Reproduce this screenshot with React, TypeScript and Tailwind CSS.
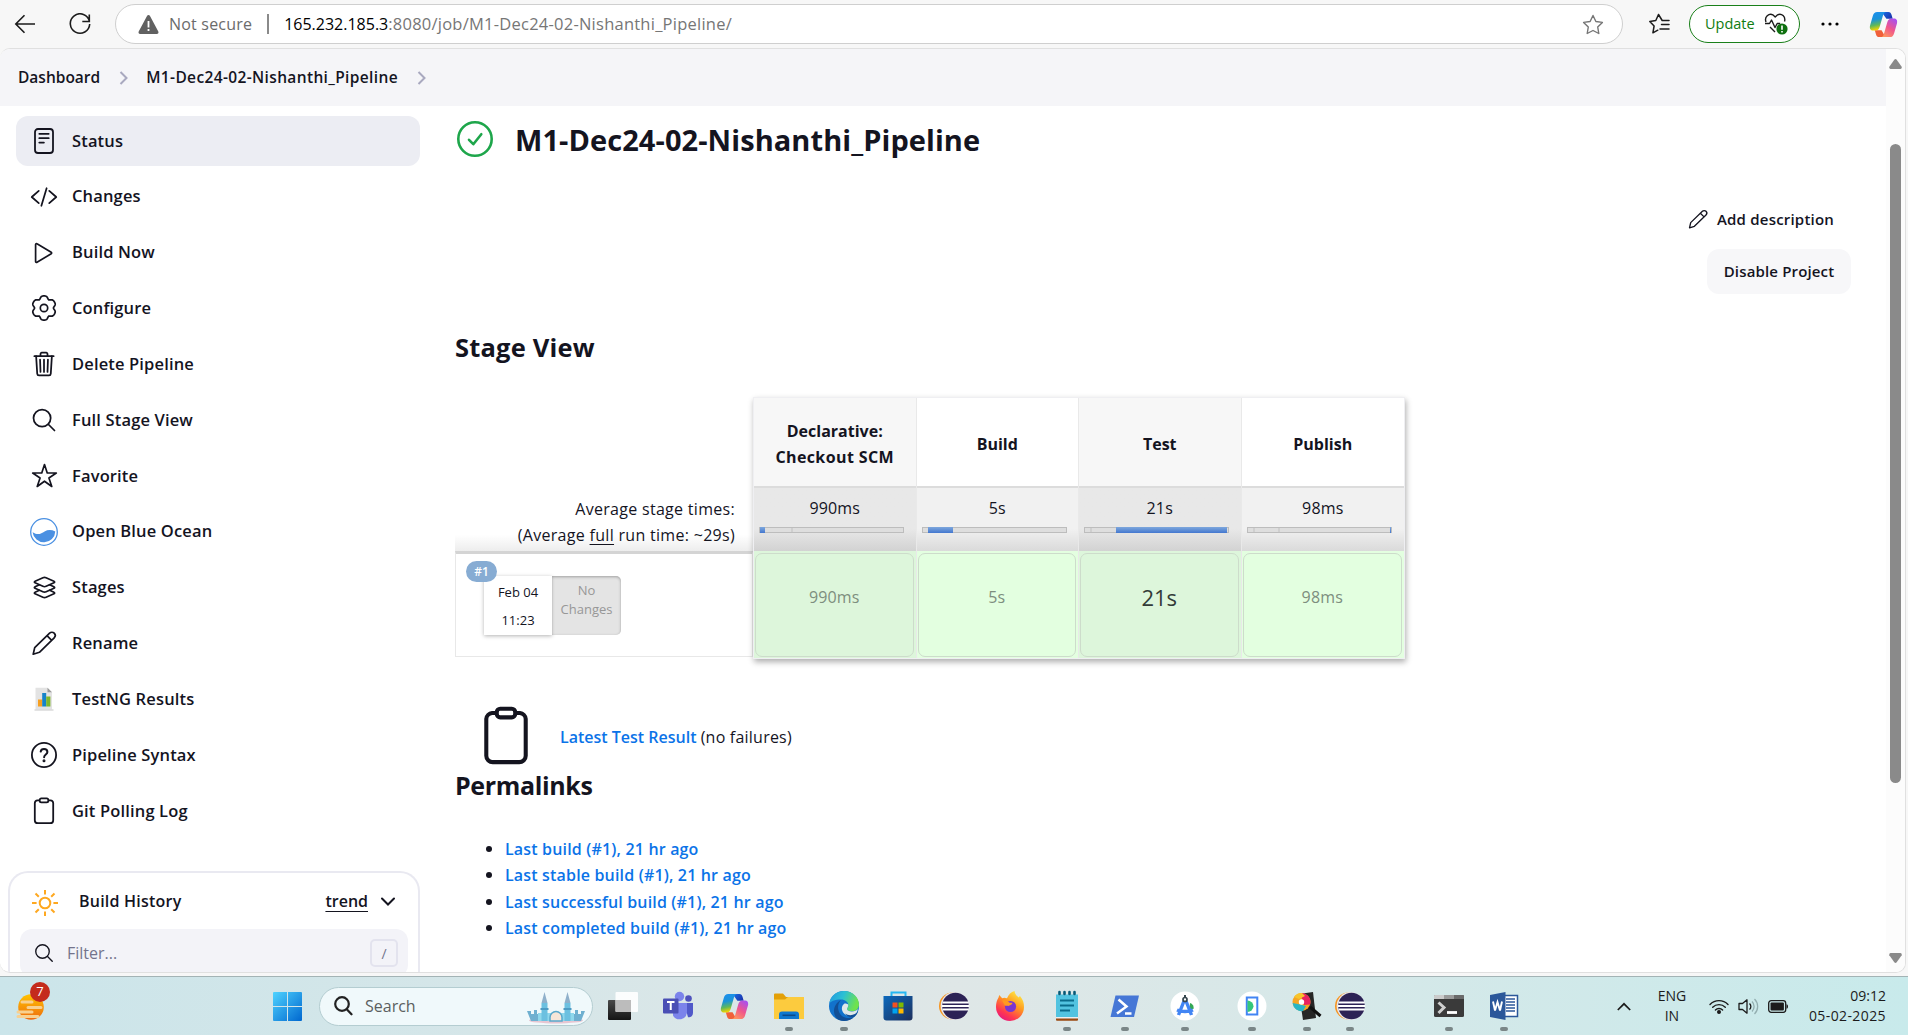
import { type ReactNode } from 'react';
import { IoCodeSlashOutline, IoSearchOutline, IoLayersOutline, IoStarOutline, IoTrashOutline } from 'react-icons/io5';

const ink = '#14141f';

function S({ c = '', children }: { c?: string; children: ReactNode }) {
  return <span className={'inline-block whitespace-nowrap ' + c}>{children}</span>;
}

function StatusIcon() {
  return (
    <svg width="28" height="28" viewBox="0 0 28 28" fill="none" stroke={ink} strokeWidth="1.8" strokeLinecap="round">
      <rect x="5" y="2" width="18" height="24" rx="3" />
      <path d="M9.3 6.8h9.4M9.3 11.2h9.4M9.3 15.6h4.6" />
    </svg>
  );
}
function PlayIcon() {
  return (
    <svg width="28" height="28" viewBox="0 0 28 28" fill="none" stroke={ink} strokeWidth="1.7" strokeLinejoin="round">
      <path d="M5.6 5.6v16.800c0 .8.8 1.200 1.400.8l14.200-8.400c.6-.4.6-1.200 0-1.600L7 4.800c-.6-.4-1.400 0-1.400.8z" />
    </svg>
  );
}

// Six-lobed cog outline, sampled in polar coordinates.
const cog =
  Array.from({ length: 120 }, (_, i) => {
    const t = (i / 120) * Math.PI * 2;
    const r = 11.1 + 1.3 * Math.cos(6 * (t + Math.PI / 2)) - 0.35 * Math.cos(12 * (t + Math.PI / 2));
    return `${i ? 'L' : 'M'}${(14 + r * Math.cos(t)).toFixed(2)} ${(14 + r * Math.sin(t)).toFixed(2)}`;
  }).join('') + 'Z';

function GearIcon() {
  return (
    <svg width="28" height="28" viewBox="0 0 28 28" fill="none" stroke={ink} strokeWidth="1.7" strokeLinejoin="round">
      <path d={cog} />
      <circle cx="14" cy="14" r="3.700" />
    </svg>
  );
}
function OceanIcon() {
  return (
    <svg width="28" height="28" viewBox="0 0 28 28">
      <circle cx="14" cy="14" r="13.300" fill="white" stroke="#4a90e2" strokeWidth="1.300" />
      <path d="M2.600 14.200C8 17.600 11 15.600 14.600 13.400 18 11.400 21.600 11.600 25.300 13.400A11.400 11.400 0 0 1 2.600 14.200z" fill="#4a90e2" />
    </svg>
  );
}
function PencilIcon({ size = 28 }: { size?: number }) {
  return (
    <svg width={size} height={size} viewBox="0 0 28 28" fill="none" stroke={ink} strokeWidth="1.700" strokeLinejoin="round">
      <path d="M3.200 25.200l1.500-6.600L19.600 4.200a3.200 3.200 0 0 1 4.600 4.600L9.400 23.300zM17 6.700l4.700 4.600" />
    </svg>
  );
}
function TestNGIcon() {
  return (
    <svg width="28" height="28" viewBox="0 0 28 28">
      <path d="M5.500 2.800h12l4.500 4.400v17.200h-16.500z" fill="#e3e3e3" />
      <path d="M17.500 2.800l4.500 4.400h-4.500z" fill="#9a9a9a" />
      <path d="M4.500 24.400h19v1.200h-19z" fill="#d0d0d0" />
      <rect x="8" y="14.500" width="4.200" height="7" fill="#f7a021" />
      <rect x="12.200" y="8" width="4" height="13.500" fill="#1683c8" />
      <rect x="16.200" y="11.500" width="4.200" height="10" fill="#7fb72b" />
    </svg>
  );
}
function HelpIcon() {
  return (
    <svg width="28" height="28" viewBox="0 0 28 28" fill="none" stroke={ink} strokeWidth="1.800" strokeLinecap="round" strokeLinejoin="round">
      <circle cx="14" cy="14" r="12.100" />
      <path d="M10.700 10.600c.2-1.500 1.500-2.500 3.300-2.500 2 0 3.400 1.100 3.400 2.800 0 2.600-3.300 2.500-3.300 5.300" strokeWidth="2" />
      <circle cx="14" cy="19.800" r=".6" fill={ink} />
    </svg>
  );
}
function ClipboardIcon({ size = 28, sw = 1.8 }: { size?: number; sw?: number }) {
  return (
    <svg width={size} height={size} viewBox="0 0 28 28" fill="none" stroke={ink} strokeWidth={sw}>
      <path d="M10 3.300H7.500A3 3 0 0 0 4.800 6v17.200a3 3 0 0 0 3 3h12.400a3 3 0 0 0 3-3V6a3 3 0 0 0-2.700-2.700H18" />
      <rect x="9.700" y="1.300" width="8.600" height="4" rx="1.600" />
    </svg>
  );
}

const nav: [string, ReactNode][] = [
  ['Status', <StatusIcon />],
  ['Changes', <IoCodeSlashOutline size={28} />],
  ['Build Now', <PlayIcon />],
  ['Configure', <GearIcon />],
  ['Delete Pipeline', <IoTrashOutline size={28} />],
  ['Full Stage View', <IoSearchOutline size={28} />],
  ['Favorite', <IoStarOutline size={27} />],
  ['Open Blue Ocean', <OceanIcon />],
  ['Stages', <IoLayersOutline size={27} />],
  ['Rename', <PencilIcon />],
  ['TestNG Results', <TestNGIcon />],
  ['Pipeline Syntax', <HelpIcon />],
  ['Git Polling Log', <ClipboardIcon />],
];

function Chevron() {
  return (
    <svg width="10" height="14" viewBox="0 0 10 14" fill="none" stroke="#a9a9bf" strokeWidth="2">
      <path d="M1.500 1l6 6-6 6" />
    </svg>
  );
}

function Copilot({ size = 30 }: { size?: number }) {
  return (
    <svg width={size} height={size} viewBox="0 0 30 30">
      <defs>
        <linearGradient id="cpa" x1="0" y1="0" x2="0.2" y2="1"><stop offset="0" stopColor="#1b8ff0" /><stop offset=".45" stopColor="#1b93d8" /><stop offset=".75" stopColor="#5fb85a" /><stop offset="1" stopColor="#f2d400" /></linearGradient>
        <linearGradient id="cpb" x1="0.8" y1="0" x2="0.2" y2="1"><stop offset="0" stopColor="#a850f0" /><stop offset=".5" stopColor="#f0568c" /><stop offset="1" stopColor="#ff9a5c" /></linearGradient>
        <linearGradient id="cpc" x1="0" y1="0" x2="1" y2="0.5"><stop offset="0" stopColor="#1a6fe8" /><stop offset="1" stopColor="#1a38b0" /></linearGradient>
      </defs>
      <path d="M13 2h7c2 0 2.800 1.200 3.300 3l1.200 4h-6.500z" fill="url(#cpc)" />
      <path d="M17 28h-6.500c-2 0-2.800-1.200-3.300-3L6 21h7z" fill="#f0603a" />
      <path d="M8.500 2h9.500c-2 0-2.900 1.400-3.500 3.500L11 17.500c-.8 2.500-2 3.700-4.500 3.700H4C1.200 21.200.4 18.500 1.100 16L4 6c.9-2.800 2-4 4.500-4z" fill="url(#cpa)" />
      <path d="M21.500 28H12c2 0 2.900-1.400 3.500-3.500L19 12.500c.8-2.500 2-3.700 4.500-3.700H26c2.800 0 3.600 2.700 2.900 5.200L26 24c-.9 2.800-2 4-4.500 4z" fill="url(#cpb)" />
    </svg>
  );
}

function AddressBar() {
  return (
    <header className="flex h-12 shrink-0 items-center bg-[#f7f7f7] pr-[10px] pl-[14px]">
      <svg width="22" height="20" viewBox="0 0 22 20" fill="none" stroke="#1b1b1b" strokeWidth="1.600"><path d="M21 10H2M10.500 1.200L1.800 10l8.700 8.800" /></svg>
      <svg className="ml-[33px]" width="22" height="22" viewBox="0 0 22 22" fill="none" stroke="#1b1b1b" strokeWidth="1.600"><path d="M20.500 8.500A9.700 9.700 0 1 0 20.700 11M20.300 1.500v7h-7" /></svg>
      <div className="ml-[24px] flex h-10 w-[1508px] items-center rounded-full border border-[#cfcfcf] bg-white pr-[18px] pl-[22px]">
        <svg width="21" height="19" viewBox="0 0 21 19"><path d="M10.500 0c.7 0 1.200.3 1.500.9l8.300 15.600c.6 1.100-.1 2.500-1.500 2.500H2.200C.8 19 .1 17.600.7 16.500L9 .9c.3-.6.8-.9 1.500-.9z" fill="#616161" /><path d="M9.600 6h1.800v6.500H9.600zM9.600 14h1.800v2H9.600z" fill="white" /></svg>
        <S c="ml-[10px] text-[16px] tracking-[0.2px] text-[#6b6b6b]">Not secure</S>
        <div className="mx-[15px] h-5 w-[2px] bg-[#8a8a8a]" />
        <div className="text-[16px] text-[#767676]"><S c="text-black">165.232.185.3</S><S c="text-[16.5px] tracking-[0.24px]">:8080/job/M1-Dec24-02-Nishanthi_Pipeline/</S></div>
        <svg className="ml-auto" width="22" height="21" viewBox="0 0 22 21" fill="none" stroke="#757575" strokeWidth="1.400" strokeLinejoin="round"><path d="M11 1.500l2.900 6 6.500.9-4.700 4.600 1.100 6.500-5.800-3-5.800 3L6.300 13 1.600 8.400l6.500-.9z" /></svg>
      </div>
      <svg className="ml-[25px]" width="22" height="22" viewBox="0 0 22 22" fill="none" stroke="#1b1b1b" strokeWidth="1.500" strokeLinejoin="round" strokeLinecap="round"><path d="M19.500 7.500h-5.300L10.500 1.500l-2.700 6-6 .9 4.300 4.600-1.200 6.800 4.900-2.600M13.500 11.500h7.500M12 16h9M15 7.500h6" /></svg>
      <div className="ml-[19px] flex h-[38px] w-[111px] items-center justify-between rounded-full border-[1.5px] border-[#1a801a] bg-white pr-[11px] pl-[15px]">
        <S c="text-[14.5px] text-[#107c10]">Update</S>
        <svg width="24" height="22" viewBox="0 0 24 22" fill="none" stroke="#1b1b1b" strokeWidth="1.400" strokeLinejoin="round"><path d="M2 9C0 4 5 0 8.800 1.800L11.200 4l2.400-2.200C17.500 0 22 3.500 20.500 8.500M1 10.500h4.500l2-3.500 3.500 7.500 2.200-4h3M6 14l5 5" /><circle cx="18" cy="16" r="5.600" fill="#0f7010" stroke="none" /><path d="M18 12.500v4.300M18 18v1.500" stroke="white" strokeWidth="1.600" /></svg>
      </div>
      <svg className="ml-[21px]" width="18" height="4" viewBox="0 0 18 4"><circle cx="2" cy="2" r="1.600" /><circle cx="9" cy="2" r="1.600" /><circle cx="16" cy="2" r="1.600" /></svg>
      <div className="ml-auto"><Copilot size={29} /></div>
    </header>
  );
}

function Sidebar() {
  return (
    <aside className="flex w-[420px] shrink-0 flex-col">
      <nav className="mt-[10px] ml-4 flex h-[719px] shrink-0 flex-col justify-between pb-0 min-h-[720px]">
        {nav.map(([label, icon], i) => (
          <div key={label} className={`flex h-[50px] shrink-0 items-center rounded-[12px] pl-[14px] ${i === 0 ? 'bg-[#ecedf3]' : ''}`}>
            <div className="flex w-7 justify-center">{icon}</div>
            <S c="ml-[14px] text-[16.5px] font-semibold tracking-[0.15px]">{label}</S>
          </div>
        ))}
      </nav>
      <section className="mt-[35px] ml-2 h-[130px] shrink-0 rounded-t-[20px] border-2 border-b-0 border-[#e9e9f1] px-[10px]">
        <div className="flex h-[56px] items-center pl-[11px]">
          <svg className="mt-1" width="28" height="28" viewBox="0 0 28 28" fill="none" stroke="#fea820" strokeWidth="2"><circle cx="14" cy="14" r="5.300" /><path d="M14 1v4.600M14 22.400V27M1 14h4.600M22.400 14H27M4.500 4.500l3.300 3.300M20.200 20.200l3.300 3.300M4.500 23.500l3.300-3.300M20.200 7.800l3.300-3.300" /></svg>
          <S c="ml-[20px] text-[16px] font-semibold tracking-[0.22px]">Build History</S>
          <div className="ml-auto flex items-center pr-[13px]">
            <S c="text-[16px] font-semibold underline decoration-1 underline-offset-4">trend</S>
            <svg className="ml-[13px]" width="14" height="9" viewBox="0 0 14 9" fill="none" stroke={ink} strokeWidth="2" strokeLinecap="round"><path d="M1 1.500l6 6 6-6" /></svg>
          </div>
        </div>
        <div className="flex h-[48px] items-center rounded-[12px] bg-[#f3f3f8] pr-[10px] pl-[13px]">
          <IoSearchOutline size={22} />
          <S c="ml-[12px] text-[16px] font-medium text-[#73738c]">Filter...</S>
          <div className="ml-auto flex h-7 w-7 items-center justify-center rounded-[5px] border-2 border-[#e3e3ee] text-[14px] text-[#73738c]">/</div>
        </div>
      </section>
    </aside>
  );
}

const stages = [
  { name: 'Declarative: Checkout SCM', avg: '990ms', left: 0, width: 3.5, marks: [22], head: 'bg-[#f7f7f7]', avgc: 'from-[#e8e8e8] via-[#e8e8e8] to-[#d2d2d2]', cell: 'bg-[#ddf6db]', big: false },
  { name: 'Build', avg: '5s', left: 3.5, width: 18, marks: [], head: 'bg-white', avgc: 'from-[#f1f1f1] via-[#f1f1f1] to-[#dadada]', cell: 'bg-[#e3ffe0]', big: false },
  { name: 'Test', avg: '21s', left: 22, width: 77.5, marks: [3.5], head: 'bg-[#f7f7f7]', avgc: 'from-[#e8e8e8] via-[#e8e8e8] to-[#d2d2d2]', cell: 'bg-[#ddf6db]', big: true },
  { name: 'Publish', avg: '98ms', left: 99.4, width: 1, marks: [3.5, 21.5], head: 'bg-white', avgc: 'from-[#f1f1f1] via-[#f1f1f1] to-[#dadada]', cell: 'bg-[#e3ffe0]', big: false },
];

function StageTable() {
  return (
    <div className="mt-[32px] flex items-start">
      <div className="flex h-[260px] w-[298px] flex-col">
        <div className="mt-[89px] flex h-[65px] flex-col items-end justify-end bg-linear-to-b from-white via-white via-75% to-[#ededed] pr-[18px] pb-[3px] text-[16px] leading-[26px] tracking-[0.3px]">
          <S>Average stage times:</S>
          <S>(Average <span className="underline underline-offset-[3px]">full</span> run time: ~29s)</S>
        </div>
        <div className="h-[106px] border border-t-3 border-[#e8e8e8] border-t-[#d4d4d4] pt-[22px] pl-[28px]">
          <div className="relative flex h-[59px] w-[137px] text-[13px]">
            <div className="absolute -top-[15px] -left-[18px] z-10 flex h-[21px] w-[31px] items-center justify-center rounded-full bg-[#87acd3] text-[12px] font-semibold text-white">#1</div>
            <div className="flex w-[68px] flex-col items-center justify-center gap-[2px] bg-white leading-[26px] shadow-[0_1px_4px_rgba(0,0,0,.3)]"><S>Feb 04</S><S>11:23</S></div>
            <div className="flex w-[69px] flex-col items-center rounded-r-[5px] bg-[#e4e4e4] pt-[5px] leading-[19px] text-[#979797] shadow-[inset_0_1px_3px_rgba(0,0,0,.3)]"><S>No</S><S>Changes</S></div>
          </div>
        </div>
      </div>
      <div className="grid h-[262px] w-[652px] grid-cols-4 border border-[#efeff2] shadow-[1px_3px_6px_rgba(0,0,0,.32)]">
        {stages.map((s) => (
          <div key={s.name} className="flex flex-col border-r border-[#e9e9e9] last:border-r-0">
            <div className={`flex h-[88px] items-center justify-center px-4 pt-[4px] text-center text-[16px] leading-[26px] font-bold ${s.head}`}>
              <span>{s.name.includes(' ') ? <><S>Declarative:</S><br /><S c="tracking-[0.4px]">Checkout SCM</S></> : <S>{s.name}</S>}</span>
            </div>
            <div className={`h-[65px] border-t-2 border-[#dcdcdc] bg-linear-to-b via-65% ${s.avgc}`}>
              <div className="mt-[8px] text-center text-[16px] leading-[24px] tracking-[0.15px]"><S>{s.avg}</S></div>
              <div className="relative mt-[7px] ml-[5px] h-[6px] w-[145px] border border-[#bdbdbd] bg-[#dedede]">
                {s.marks.map((m) => <div key={m} className="absolute top-0 h-full w-[2px] bg-[#cfcfcf]" style={{ left: `${m}%` }} />)}
                <div className="absolute -top-px h-[6px] bg-linear-to-b from-[#7ea7dc] to-[#4377cf]" style={{ left: `${s.left}%`, width: `${s.width}%` }} />
              </div>
            </div>
            <div className={`flex-1 pt-[2px] pr-[2px] pb-px pl-px ${s.cell}`}>
              <div className={`flex h-full items-center justify-center rounded-[7px] border border-[#cddccb] pb-[16px] ${s.big ? 'text-[22px] text-[#333b38]' : 'text-[16px] tracking-[0.15px] text-[#7d8e7e]'}`}><S>{s.avg}</S></div>
            </div>
          </div>
        ))}
      </div>
    </div>
  );
}

const links = ['Last build (#1), 21 hr ago', 'Last stable build (#1), 21 hr ago', 'Last successful build (#1), 21 hr ago', 'Last completed build (#1), 21 hr ago'];

function Main() {
  return (
    <main className="flex flex-1 flex-col pl-[35px]">
      <div className="mt-[12px] flex h-[44px] shrink-0 items-center">
        <svg className="-mt-0.5 ml-px" width="38" height="38" viewBox="0 0 38 38" fill="none" stroke="#1ea64b" strokeWidth="2.600" strokeLinecap="round" strokeLinejoin="round"><circle cx="19" cy="19" r="16.700" /><path d="M13 19.800l4.300 4.400 8-10" /></svg>
        <h1 className="ml-[21px] text-[29px] font-bold tracking-[0.07px]"><S>M1-Dec24-02-Nishanthi_Pipeline</S></h1>
      </div>
      <div className="mt-[42px] flex shrink-0 flex-col items-end pr-[35px]">
        <div className="flex h-[30px] items-center pr-[17px]"><PencilIcon size={22} /><S c="ml-[8px] text-[15px] font-semibold tracking-[0.2px]">Add description</S></div>
        <div className="mt-[15px] flex h-[45px] w-[144px] items-center justify-center rounded-[12px] bg-[#f7f7f9] text-[15px] font-semibold tracking-[0.15px]"><S>Disable Project</S></div>
      </div>
      <h2 className="mt-[35px] text-[25.5px] leading-[36px] font-bold tracking-[0.2px]"><S>Stage View</S></h2>
      <StageTable />
      <div className="mt-[45px] flex h-[64px] shrink-0 items-center">
        <div className="ml-[21px]"><ClipboardIcon size={60} sw={1.9} /></div>
        <p className="ml-[24px] pt-px text-[16px]"><S c="font-semibold text-[#0b73e8]">Latest Test Result</S> <S c="tracking-[0.22px]">(no failures)</S></p>
      </div>
      <h2 className="-mt-px text-[25px] leading-[36px] font-bold tracking-[-0.35px]"><S>Permalinks</S></h2>
      <ul className="mt-[33px] text-[16px] leading-[26.3px] font-semibold tracking-[0.17px] text-[#0b73e8]">
        {links.map((l) => (
          <li key={l} className="flex items-center pl-[31px]"><span className="mr-[13px] h-[6px] w-[6px] rounded-full bg-[#14141f]" /><S>{l}</S></li>
        ))}
      </ul>
    </main>
  );
}

function Eclipse() {
  return (
    <svg width="32" height="32" viewBox="0 0 32 32">
      <circle cx="14.500" cy="16" r="13.500" fill="#f7941e" /><circle cx="16.500" cy="16" r="13.900" fill="#e8e6ea" /><circle cx="17.500" cy="16" r="13.300" fill="#2c2255" />
      <path d="M4.500 12.500h26.300M4 16h27.200M4.500 19.500h26.300" stroke="#fff" strokeWidth="1.800" />
    </svg>
  );
}

const apps: { ml: string; dot?: boolean; icon: ReactNode }[] = [
  { ml: 'ml-[14px]', icon: <svg width="32" height="32" viewBox="0 0 32 32"><defs><linearGradient id="tv" x1="0" y1="0" x2="0" y2="1"><stop offset="0" stopColor="#4a4a4a" /><stop offset="1" stopColor="#151515" /></linearGradient></defs><rect x="1" y="10" width="23" height="20" rx="1" fill="url(#tv)" /><rect x="8.500" y="2" width="22.500" height="20" rx="1" fill="#fff" fillOpacity=".9" /><path d="M8.500 10H24v12H9.500a1 1 0 0 1-1-1z" fill="#bcbcbc" /></svg> },
  { ml: 'ml-[23px]', icon: <svg width="32" height="32" viewBox="0 0 32 32"><circle cx="26.500" cy="8.500" r="3.300" fill="#4f52bd" /><circle cx="17.500" cy="6.500" r="4.700" fill="#7b83eb" /><path d="M22 13h9v9.500c0 3.500-2.500 5-5 4.800z" fill="#5059c9" /><path d="M11 13h14v9.500a7.500 7.500 0 0 1-14 3z" fill="#7b83eb" /><rect x="1" y="8.500" width="15.500" height="15" rx="1" fill="#4a4fb5" /><path d="M5 12h7.500M8.750 12v8" stroke="white" strokeWidth="2" /></svg> },
  { ml: 'ml-[24px]', icon: <Copilot size={29} /> },
  { ml: 'ml-[23px]', dot: true, icon: <svg width="32" height="32" viewBox="0 0 32 32"><path d="M1 4.500a1 1 0 0 1 1-1h8l3 3.500h17v8H1z" fill="#e3a008" /><path d="M1 9.500h11l3-2.500h16v22H1z" fill="#fccb3e" /><path d="M6 29v-4.500a3 3 0 0 1 3-3h14a3 3 0 0 1 3 3V29z" fill="#0f78cf" /><path d="M9.500 25.300h13" stroke="#0b4a8a" strokeWidth="1.600" /></svg> },
  { ml: 'ml-[23px]', dot: true, icon: <svg width="32" height="32" viewBox="0 0 32 32"><defs><linearGradient id="ed" x1="0" y1="0" x2="1" y2="0.3"><stop offset="0" stopColor="#2196e0" /><stop offset=".5" stopColor="#2cc0d4" /><stop offset="1" stopColor="#6fe24e" /></linearGradient></defs><circle cx="16" cy="16" r="15" fill="#1272cc" /><path d="M1.200 14C2 6 8.500 1 16 1c9 0 15 6.500 15 13.500 0 4-3 6.800-7 6.800-3 0-5-1-5-2.300 0-1 1.300-1.500 1.300-4C20.300 12 17 9.500 13 9.500c-6 0-11 2-11.800 4.500z" fill="url(#ed)" /><path d="M13 10c-3 3-4 8-1.500 13 2.500 4.500 8.500 6.500 14.500 4C22 31 16 32 11 30c-7-4-7-15 2-20z" fill="#124f96" /><path d="M20.300 15c0 2-1.300 3-1.300 4 0 1.300 2 2.500 5 2.500 2.500 0 4.500-.9 6-2.500-.8 3-2 5.200-3.700 6.800-3 1-7.300.7-10-2-3.500-3.500-3-8 .2-10.300 2.200 0 3.600.5 3.800 1.500z" fill="#dfe8e8" /><path d="M30 21c-2 3.500-8 6-13 2.500 2 3.500 6 4.500 9.500 3.300 1.800-1.400 3-3.600 3.500-5.800z" fill="#124f96" /></svg> },
  { ml: 'ml-[22px]', icon: <svg width="32" height="32" viewBox="0 0 32 32"><defs><linearGradient id="st" x1="0" y1="0" x2="1" y2="1"><stop offset="0" stopColor="#0b69bd" /><stop offset="1" stopColor="#1e2f5c" /></linearGradient></defs><path d="M9.500 7V2.500h14V7" fill="none" stroke="#26b8f2" strokeWidth="2" /><path d="M1.500 6h29v21.500a3 3 0 0 1-3 3h-23a3 3 0 0 1-3-3z" fill="url(#st)" /><path d="M10.500 12.500h5v5h-5z" fill="#f25022" /><path d="M16.500 12.500h5v5h-5z" fill="#7fba00" /><path d="M10.500 18.500h5v5h-5z" fill="#00a4ef" /><path d="M16.500 18.500h5v5h-5z" fill="#ffb900" /></svg> },
  { ml: 'ml-[24px]', icon: <Eclipse /> },
  { ml: 'ml-[24px]', icon: <svg width="32" height="32" viewBox="0 0 32 32"><defs><linearGradient id="ff" x1="0.8" y1="0" x2="0.2" y2="1"><stop offset="0" stopColor="#fff04a" /><stop offset=".4" stopColor="#ff9a1f" /><stop offset=".75" stopColor="#ff3750" /><stop offset="1" stopColor="#e31587" /></linearGradient></defs><path d="M3.500 9.500C4.500 8 5 6.500 5.200 5l3 3.200c1.500-.7 3-.7 4.800 0C14.500 4.500 17 2 20.500 1c.2 3 2 4.500 4 6.500l1.500-1.500c3 3.500 4 7 4 11a14 14 0 0 1-28 0c0-3 .5-5.500 1.500-7.500z" fill="url(#ff)" /><circle cx="16.500" cy="16.500" r="5.600" fill="#7a35d0" /><path d="M8 10.500c3-.8 5 0 7 1.800 1 .8 2.500.5 3.500.7-.5 2-3 2-4 3-1.500-1-3 .5-3.500-.5z" fill="#ff9a1f" /></svg> },
  { ml: 'ml-[25px]', dot: true, icon: <svg width="32" height="32" viewBox="0 0 32 32"><path d="M5 4.500h22V27H5z" fill="#52c3e0" /><path d="M5 27h22v1.500H5z" fill="#eee" /><path d="M5 28.500h22v1.300a1 1 0 0 1-1 1H6a1 1 0 0 1-1-1z" fill="#9a4a12" /><path d="M9 10.500h14M9 15.500h14M9 20.500h10" stroke="#0a6c8c" strokeWidth="1.800" /><path d="M8.500 2v2M13.500 2v2M18.500 2v2M23.500 2v2" stroke="#075a78" strokeWidth="2.600" strokeLinecap="round" /></svg> },
  { ml: 'ml-[26px]', dot: true, icon: <svg width="32" height="32" viewBox="0 0 32 32"><path d="M6.500 5.500h23.500l-5 21.500H1.500z" fill="#4677d6" /><path d="M9.500 9.500l8 7-9.500 7M16 23.500h6.500" stroke="white" strokeWidth="2.500" fill="none" /></svg> },
  { ml: 'ml-[28px]', dot: true, icon: <svg width="32" height="32" viewBox="0 0 32 32"><circle cx="16" cy="16" r="14.500" fill="white" /><path d="M21 13a5 5 0 0 1 3.500 6h-4z" fill="#34a853" /><path d="M15 11L9.500 25M17 11l5.500 14M8 20c4.500 2 11.500 2 16 0" stroke="#4285f4" strokeWidth="3.400" fill="none" /><circle cx="16" cy="9.500" r="2" fill="white" stroke="#37474f" strokeWidth="1.700" /><path d="M16 5v2.500" stroke="#37474f" strokeWidth="2" /></svg> },
  { ml: 'ml-[35px]', dot: true, icon: <svg width="32" height="32" viewBox="0 0 32 32"><circle cx="16" cy="16" r="14.500" fill="white" /><rect x="10.800" y="7.500" width="10.500" height="17" fill="white" stroke="#4285f4" strokeWidth="2" /><path d="M11.500 10.500a6 6 0 0 1 6 5.800 6 6 0 0 1-6 5.700z" fill="#34c77b" /></svg> },
  { ml: 'ml-[23px]', dot: true, icon: <svg width="32" height="32" viewBox="0 0 32 32"><path d="M8 4l14-2 3 26-13 2z" fill="#262626" /><circle cx="10.500" cy="12" r="9" fill="#f5a623" /><path d="M10.500 3a9 9 0 0 1 8.600 11.500L13 15l-2-6z" fill="#e8225f" /><path d="M1.600 13A9 9 0 0 0 12 21l3-5-6-1.500z" fill="#28b6c6" /><path d="M3 7A9 9 0 0 1 11 3l3 3-6 3z" fill="#f7c52c" /><circle cx="10.500" cy="12" r="2.700" fill="white" /><path d="M19 17l10.500 9" stroke="#111" strokeWidth="3" /></svg> },
  { ml: 'ml-[11px]', dot: true, icon: <Eclipse /> },
  { ml: 'ml-[67px]', dot: true, icon: <svg width="32" height="32" viewBox="0 0 32 32"><rect x="1" y="5" width="30" height="22" rx="1.500" fill="#3a3a3a" /><path d="M2 5h9v4H1V6a1 1 0 0 1 1-1z" fill="#cbcbcb" /><path d="M11 5h10v4H11z" fill="#9a9a9a" /><path d="M21 5h9a1 1 0 0 1 1 1v3H21z" fill="#6a6a6a" /><path d="M5.500 12.500l5.500 5-5.500 5.500" stroke="#cfcfcf" strokeWidth="3" fill="none" /><path d="M14 22.500h10" stroke="white" strokeWidth="2.800" /></svg> },
  { ml: 'ml-[23px]', dot: true, icon: <svg width="32" height="32" viewBox="0 0 32 32"><path d="M15 5.500h14.500v21H15z" fill="white" stroke="#2b579a" strokeWidth="1.500" /><path d="M18 9h9M18 12h9M18 15h9M18 18h9M18 21h9" stroke="#2b579a" strokeWidth="1.500" /><path d="M2 5l15.500-3v28L2 27z" fill="#2b579a" /><path d="M5 11.500l2 9 2.500-8.500 2.500 8.500 2-9" stroke="white" strokeWidth="1.900" fill="none" /></svg> },
];

function Castle() {
  return (
    <svg width="60" height="32" viewBox="0 0 60 32">
      <ellipse cx="30" cy="28.500" rx="27" ry="3" fill="#e6c6d2" />
      <path d="M1 19h4v3h3v-4h3v4h4v7H5zM59 19h-4v3h-3v-4h-3v4h-4v7h10z" fill="#6fb0d0" />
      <path d="M12 21h36v8H12z" fill="#8fd8ec" />
      <path d="M15.500 11h6v18h-6zM38.500 11h6v18h-6z" fill="#6cc0e0" />
      <path d="M14.500 16h8v2h-8zM37.500 16h8v2h-8z" fill="#4d9cc4" />
      <path d="M18.500 0l3 11h-6zM41.500 0l3 11h-6z" fill="#8fb0ca" />
      <path d="M24 29v-3.500a6 6 0 0 1 12 0V29z" fill="#f7e6d8" stroke="#5aa8cc" strokeWidth="1.500" />
    </svg>
  );
}

function Taskbar() {
  return (
    <footer className="flex h-[59px] shrink-0 items-center border-t border-[#a3b3b5] bg-linear-to-r from-[#cbe5ea] via-[#dfe7e7] via-50% to-[#c8eaeb] pr-[22px] pl-[14px]">
      <div className="relative h-[34px] w-9">
        <svg width="34" height="34" viewBox="0 0 34 34"><defs><linearGradient id="wt" x1="0" y1="0" x2="0" y2="1"><stop offset="0" stopColor="#ffc400" /><stop offset="1" stopColor="#ee6a10" /></linearGradient></defs><circle cx="17" cy="18" r="12.800" fill="url(#wt)" /><path d="M8 13h10M14 18.500h13M4 23h14M4 27.500h20" stroke="#f8d090" strokeWidth="3" strokeLinecap="round" /></svg>
        <div className="absolute -top-[7px] left-[16px] flex h-5 w-5 items-center justify-center rounded-full bg-[#c42b1c] text-[13px] text-white">7</div>
      </div>
      <svg className="ml-[223px]" width="29" height="29" viewBox="0 0 29 29"><defs><linearGradient id="win" x1="0" y1="0" x2="1" y2="1"><stop offset="0" stopColor="#4fd3ff" /><stop offset="1" stopColor="#0067cf" /></linearGradient></defs><path d="M1 0h13v14H0V1a1 1 0 0 1 1-1zM15 0h13a1 1 0 0 1 1 1v13H15zM0 15h14v14H1a1 1 0 0 1-1-1zM15 15h14v13a1 1 0 0 1-1 1H15z" fill="url(#win)" /></svg>
      <div className="ml-[17px] flex h-[39px] w-[274px] items-center rounded-full border border-[#b4cdd1] bg-[#f0f9fb] pr-[6px] pl-[14px]">
        <svg width="19" height="20" viewBox="0 0 19 20" fill="none" stroke="#222" strokeWidth="2.200" strokeLinecap="round"><circle cx="8" cy="8" r="6.800" /><path d="M13 13.500l4.500 4.800" /></svg>
        <S c="ml-[12px] text-[16px] text-[#5b5f60]">Search</S>
        <div className="mt-1 ml-auto"><Castle /></div>
      </div>
      {apps.map((a, i) => (
        <div key={i} className={`relative flex h-8 w-8 items-center justify-center ${a.ml}`}>
          {a.icon}
          {a.dot && <span className="absolute -bottom-[9px] left-3 h-[4px] w-2 rounded-full bg-[#7a8687]" />}
        </div>
      ))}
      <svg className="ml-auto" width="14" height="9" viewBox="0 0 14 9" fill="none" stroke="#1b1b1b" strokeWidth="1.700"><path d="M.8 8L7 1.800 13.200 8" /></svg>
      <div className="ml-[26px] flex w-[30px] flex-col items-center text-[14px] leading-[20px] text-[#1b1b1b]"><S>ENG</S><S>IN</S></div>
      <svg className="ml-[22px]" width="20" height="15" viewBox="0 0 20 15" fill="none" stroke="#1b1b1b" strokeWidth="1.400" strokeLinecap="round"><path d="M1 5.500a12.500 12.500 0 0 1 18 0M3.700 8.300a8.700 8.700 0 0 1 12.600 0M6.400 11a5 5 0 0 1 7.200 0" /><circle cx="10" cy="13" r="1.300" fill="#1b1b1b" /></svg>
      <svg className="ml-[9px]" width="21" height="17" viewBox="0 0 21 17" fill="none" stroke="#1b1b1b" strokeWidth="1.300" strokeLinejoin="round"><path d="M1 5.500h3.500L9 1.800v13.400l-4.500-3.700H1zM11.500 5.500a4 4 0 0 1 0 6" /><path d="M14 3.500a7 7 0 0 1 0 10M16.500 1a10.500 10.500 0 0 1 0 15" stroke="#93aeb0" /></svg>
      <svg className="ml-[9px]" width="21" height="13" viewBox="0 0 21 13"><rect x=".7" y=".7" width="17" height="11.600" rx="2.500" fill="none" stroke="#1b1b1b" strokeWidth="1.300" /><rect x="2.500" y="2.500" width="13.400" height="8" rx="1" fill="#1b1b1b" /><path d="M18.500 4.300c2 .3 2 4.100 0 4.400z" fill="#1b1b1b" /></svg>
      <div className="ml-[20px] flex flex-col items-end text-[14px] leading-[20px] text-[#1b1b1b]"><S>09:12</S><S c="tracking-[0.4px]">05-02-2025</S></div>
    </footer>
  );
}

export default function App() {
  return (
    <div className="flex h-[1035px] w-[1908px] flex-col overflow-hidden bg-[#f7f7f7] font-['Open_Sans',sans-serif] text-[#14141f]">
      <AddressBar />
      <div className="flex h-[925px] w-[1906px] shrink-0 overflow-hidden rounded-[10px] border-t border-r border-b border-[#e0e0e0] bg-white">
        <div className="flex min-h-0 flex-1 flex-col">
          <div className="flex h-[57px] shrink-0 items-center bg-[#f5f5f8] pl-[18px] text-[15.5px] font-semibold">
            <S>Dashboard</S><span className="ml-[19px]"><Chevron /></span>
            <S c="ml-[17px] tracking-[0.36px]">M1-Dec24-02-Nishanthi_Pipeline</S><span className="ml-[19px]"><Chevron /></span>
          </div>
          <div className="flex min-h-0 flex-1"><Sidebar /><Main /></div>
        </div>
        <div className="flex w-[19px] shrink-0 flex-col items-center bg-[#fcfcfc] pt-[10px] pb-[9px]">
          <svg width="13" height="10" viewBox="0 0 13 10"><path d="M5.300.8Q6.500-.6 7.700.8l5 7Q13 9.800 11.500 10h-10Q0 9.800.3 7.800z" fill="#8a8a8a" /></svg>
          <div className="mt-[75px] h-[639px] w-[11px] rounded-full bg-[#8a8a8a]" />
          <svg className="mt-auto" width="13" height="10" viewBox="0 0 13 10"><path d="M5.300 9.200Q6.500 10.600 7.700 9.200l5-7Q13 .2 11.500 0h-10Q0 .2.3 2.200z" fill="#8a8a8a" /></svg>
        </div>
      </div>
      <div className="h-[3px] shrink-0" />
      <Taskbar />
    </div>
  );
}
